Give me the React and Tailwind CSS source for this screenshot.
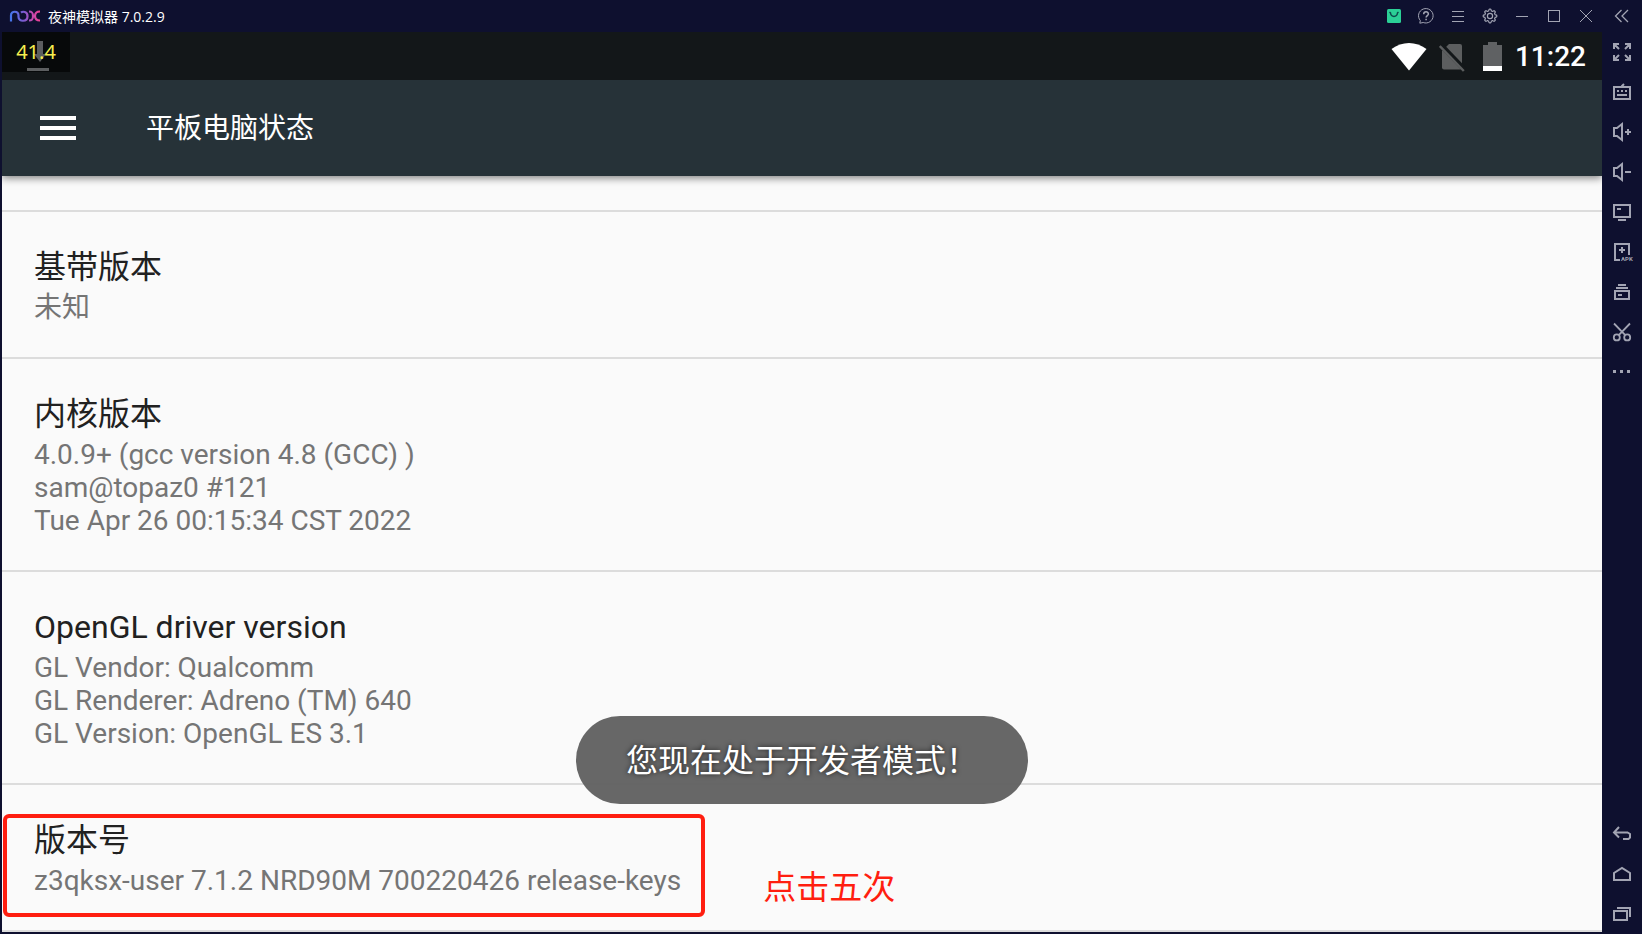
import React from "react";

const font = "font-[Roboto,'Noto_Sans_CJK_SC',sans-serif]";

function Icon({ children, className = "", stroke = 2 }) {
  return (
    <svg
      width="24"
      height="24"
      viewBox="0 0 24 24"
      fill="none"
      stroke="currentColor"
      strokeWidth={stroke}
      aria-hidden="true"
      className={className}
    >
      {children}
    </svg>
  );
}

// Outline of a cog with eight rounded teeth.
const cogPath = (() => {
  const points = [];
  for (let i = 0; i < 96; i += 1) {
    const a = (i / 96) * Math.PI * 2;
    const wave = Math.max(-1, Math.min(1, Math.cos(a * 8) * 1.7));
    const r = 6 + wave * 0.8;
    points.push(`${(12 + r * Math.cos(a)).toFixed(2)} ${(12 + r * Math.sin(a)).toFixed(2)}`);
  }
  return `M${points.join("L")}Z`;
})();

const windowButtons = [
  {
    label: "应用商店",
    icon: (
      <Icon stroke={1.5}>
        <rect x="5" y="5" width="14" height="14" rx="1.5" fill="#2bd096" stroke="none" />
        <path d="M7.5 8.2l1 .8c.6 4.6 6.4 4.6 7 0l1-.8" stroke="#0d4a4c" />
      </Icon>
    ),
  },
  {
    label: "帮助",
    icon: (
      <Icon stroke={1}>
        <path d="M6.3 16.5A7.3 7.2 0 1 1 9.2 18.5L5.8 19.2z" />
        <path d="M9.7 10.2c0-3.1 4.7-3.1 4.7-.2 0 1.6-2.3 1.7-2.3 3.6M12.1 14.7v1.5" strokeWidth="1.5" />
      </Icon>
    ),
  },
  { label: "菜单", icon: <Icon stroke={1}><path d="M6 7.5h12M6 12.5h12M6 17.5h12" /></Icon> },
  {
    label: "设置",
    icon: (
      <Icon stroke={1.2}>
        <path d={cogPath} />
        <circle cx="12" cy="12" r="2.6" />
      </Icon>
    ),
  },
  { label: "最小化", icon: <Icon stroke={1}><path d="M6 12.5h12" /></Icon> },
  { label: "最大化", icon: <Icon stroke={1}><rect x="6.5" y="6.5" width="11" height="11" /></Icon> },
  { label: "关闭", icon: <Icon stroke={1}><path d="M6 6l12 12M18 6L6 18" /></Icon> },
];

const speaker = <path d="M4 8h3l5-4v16l-5-4H4z" />;

const railTop = [
  {
    label: "全屏",
    icon: (
      <Icon>
        <path d="M4 9V4h5M4 4l5 5M15 4h5v5M20 4l-5 5M4 15v5h5M4 20l5-5M15 20h5v-5M20 20l-5-5" />
      </Icon>
    ),
  },
  {
    label: "键盘",
    icon: (
      <Icon>
        <rect x="4" y="7" width="16" height="12" />
        <path d="M11.5 6.5l2.5-2.5M7 11h2M11 11h2M15 11h2M7 15h10" />
      </Icon>
    ),
  },
  { label: "音量加", icon: <Icon>{speaker}<path d="M15 12h6M18 9v6" /></Icon> },
  { label: "音量减", icon: <Icon>{speaker}<path d="M15 12h6" /></Icon> },
  {
    label: "虚拟定位",
    icon: (
      <Icon>
        <rect x="4" y="5" width="16" height="12" />
        <path d="M7 9h4M8 20h8" />
      </Icon>
    ),
  },
  {
    label: "安装应用",
    icon: (
      <Icon className="overflow-visible">
        <path d="M19 15V4H5v16h5M12 7v6M9 10h6" />
        <text x="11" y="21" fontSize="6" fontWeight="700" stroke="none" fill="currentColor">
          APK
        </text>
      </Icon>
    ),
  },
  {
    label: "多开",
    icon: (
      <Icon>
        <path d="M8 5h8M6 8h12M8 15h4" />
        <rect x="5" y="11" width="14" height="8" />
      </Icon>
    ),
  },
  {
    label: "截图",
    icon: (
      <Icon stroke={1.8}>
        <path d="M4 3.5l11.5 11.8M20 3.5L8.5 15.3" />
        <circle cx="6.8" cy="17.4" r="3" />
        <circle cx="17.2" cy="17.4" r="3" />
      </Icon>
    ),
  },
  { label: "更多", icon: <Icon stroke={3}><path d="M3 11.5h3M10 11.5h3M17 11.5h3" /></Icon> },
];

const railBottom = [
  { label: "返回", icon: <Icon><path d="M9 5l-5 5.5 5 5M4 10.5h13.5l2.5 1.500v3.500L18.500 17H13" /></Icon> },
  { label: "主页", icon: <Icon><path d="M4 18v-7l8-5 8 5v7z" /></Icon> },
  {
    label: "最近任务",
    icon: (
      <Icon>
        <path d="M7 6h13v9" />
        <rect x="4" y="9" width="13" height="9" />
      </Icon>
    ),
  },
];

function RailGroup({ items }) {
  return (
    <div className="flex flex-col">
      {items.map((item) => (
        <button key={item.label} type="button" aria-label={item.label} className="flex h-10 w-10 items-center justify-center">
          {item.icon}
        </button>
      ))}
    </div>
  );
}

function Entry({ title, lines }) {
  return (
    <>
      <h2 className="text-[32px] leading-10 text-[#212121]">{title}</h2>
      <div className="mt-1 text-[28px] leading-[33px] text-[#757575]">
        {lines.map((line) => (
          <p key={line}>{line}</p>
        ))}
      </div>
    </>
  );
}

const rowClass = "border-b-2 border-[#dcdcdc] px-8 pt-[35px] pb-[33px]";

const entries = [
  { title: "基带版本", lines: ["未知"] },
  { title: "内核版本", lines: ["4.0.9+ (gcc version 4.8 (GCC) )", "sam@topaz0 #121", "Tue Apr 26 00:15:34 CST 2022"] },
  {
    title: "OpenGL driver version",
    lines: ["GL Vendor: Qualcomm", "GL Renderer: Adreno (TM) 640", "GL Version: OpenGL ES 3.1"],
  },
];

function TitleBar() {
  return (
    <header className="flex h-8 items-center bg-[#0e102f] text-[#a2a4b3]">
      <svg width="32" height="14" viewBox="0 0 32 14" fill="none" strokeWidth="2.2" className="ml-2 shrink-0" role="img" aria-label="nox">
        <defs>
          <linearGradient id="nox" x1="0" y1="0" x2="32" y2="0" gradientUnits="userSpaceOnUse">
            <stop offset="0" stopColor="#3a7bf0" />
            <stop offset="0.5" stopColor="#7d5bd0" />
            <stop offset="0.75" stopColor="#c44ab0" />
            <stop offset="1" stopColor="#f03f92" />
          </linearGradient>
        </defs>
        <g stroke="url(#nox)">
          <path d="M3 12.5V6.500C3 1.500 10.500 1.500 10.500 6.500V8c0 5 9 5.300 9-.8 0-5-5-5-6.500-3.600" />
          <path d="M21 2.500c3.500 0 4 1.700 4 4.500s-.5 4.500-4 4.500M32 2.500c-3.500 0-5 1.700-5 4.500s1.500 4.500 5 4.500M24.500 7h3" />
        </g>
      </svg>
      <h1 className="ml-2 pt-0.5 text-sm text-white font-['Open_Sans','Noto_Sans_CJK_SC',sans-serif]">夜神模拟器 7.0.2.9</h1>
      <div className="ml-auto flex">
        {windowButtons.map((item) => (
          <button key={item.label} type="button" aria-label={item.label} className="flex h-8 w-8 items-center justify-center">
            {item.icon}
          </button>
        ))}
        <button type="button" aria-label="收起" className="flex h-8 w-10 items-center justify-center">
          <Icon stroke={1.3}>
            <path d="M11.500 6l-6 6 6 6M18 6l-6 6 6 6" />
          </Icon>
        </button>
      </div>
    </header>
  );
}

function StatusBar() {
  return (
    <div className="relative flex h-12 items-center justify-end bg-[#131719] pt-0.5 pr-4">
      <div className="absolute top-0 left-0 flex h-10 w-[68px] items-center justify-center bg-[#07090a] text-xl text-[#f6ee4e] font-['Noto_Sans',sans-serif]">
        <svg width="24" height="32" viewBox="0 0 24 32" fill="#5c5e60" className="absolute top-2 left-6" aria-hidden="true">
          <path d="M11 1h6v13h3l-6 8-6-8h3zM1 28h22v3H1z" />
        </svg>
        <span className="relative">41.4</span>
      </div>
      <svg width="36" height="30" viewBox="0 0 36 30" fill="#fff" aria-hidden="true">
        <path d="M.5 7C11-1 25-1 35.500 7L18 28.500z" />
      </svg>
      <svg width="28" height="30" viewBox="0 0 28 30" className="ml-3" aria-hidden="true">
        <path d="M10 2h11a2 2 0 0 1 2 2v21.500a2 2 0 0 1-2 2H5a2 2 0 0 1-2-2V9z" fill="#5c5e5f" />
        <path d="M2 3l24 25" stroke="#131719" strokeWidth="5" />
        <path d="M.8 4l24 25" stroke="#5c5e5f" strokeWidth="2.4" />
      </svg>
      <svg width="20" height="30" viewBox="0 0 20 30" className="ml-4" aria-hidden="true">
        <path d="M5 0h9v3h5v21H0V3h5z" fill="#5f6163" />
        <path d="M0 24h19v5H0z" fill="#fff" />
      </svg>
      <time className="ml-3 text-[28px] leading-8 font-medium text-white">11:22</time>
    </div>
  );
}

export default function App() {
  return (
    <div className={`flex min-h-screen flex-col bg-[#0e102f] ${font}`}>
      <TitleBar />
      <div className="flex flex-1">
        <main className="relative mb-0.5 ml-0.5 flex min-w-0 flex-1 flex-col bg-[#fafafa]">
          <StatusBar />
          <div className="z-10 flex h-24 items-center bg-[#263238] shadow-[0_2px_8px_rgba(0,0,0,0.5)] [clip-path:inset(0_0_-16px_0)]">
            <button type="button" aria-label="打开导航" className="ml-[38px] flex w-9 flex-col gap-1.5">
              <span className="h-1 bg-white" />
              <span className="h-1 bg-white" />
              <span className="h-1 bg-white" />
            </button>
            <h2 className="ml-[70px] pt-0.5 text-[28px] text-white">平板电脑状态</h2>
          </div>
          <ul className="mt-[34px] border-t-2 border-[#dcdcdc]">
            {entries.map((entry) => (
              <li key={entry.title} className={rowClass}>
                <Entry {...entry} />
              </li>
            ))}
            <li className={rowClass}>
              <div className="relative w-fit">
                <Entry title="版本号" lines={["z3qksx-user 7.1.2 NRD90M 700220426 release-keys"]} />
                <div className="absolute -top-1.5 -right-6 -bottom-5 -left-[31px] rounded-md border-4 border-[#ff1e10]" />
                <p className="absolute top-12 left-full ml-[82px] text-[33px] leading-10 whitespace-nowrap text-[#ff1e10]">点击五次</p>
              </div>
            </li>
          </ul>
          <div
            role="status"
            className="absolute bottom-32 left-1/2 flex h-[88px] -translate-x-1/2 items-center rounded-full bg-[#626262]/97 px-[50px] pt-0.5 text-[32px] whitespace-nowrap text-white [text-shadow:0_0_5px_rgba(0,0,0,0.7)]"
          >
            您现在处于开发者模式！
          </div>
        </main>
        <nav aria-label="工具栏" className="flex w-10 flex-col justify-between text-[#a2a4b3]">
          <RailGroup items={railTop} />
          <RailGroup items={railBottom} />
        </nav>
      </div>
    </div>
  );
}
